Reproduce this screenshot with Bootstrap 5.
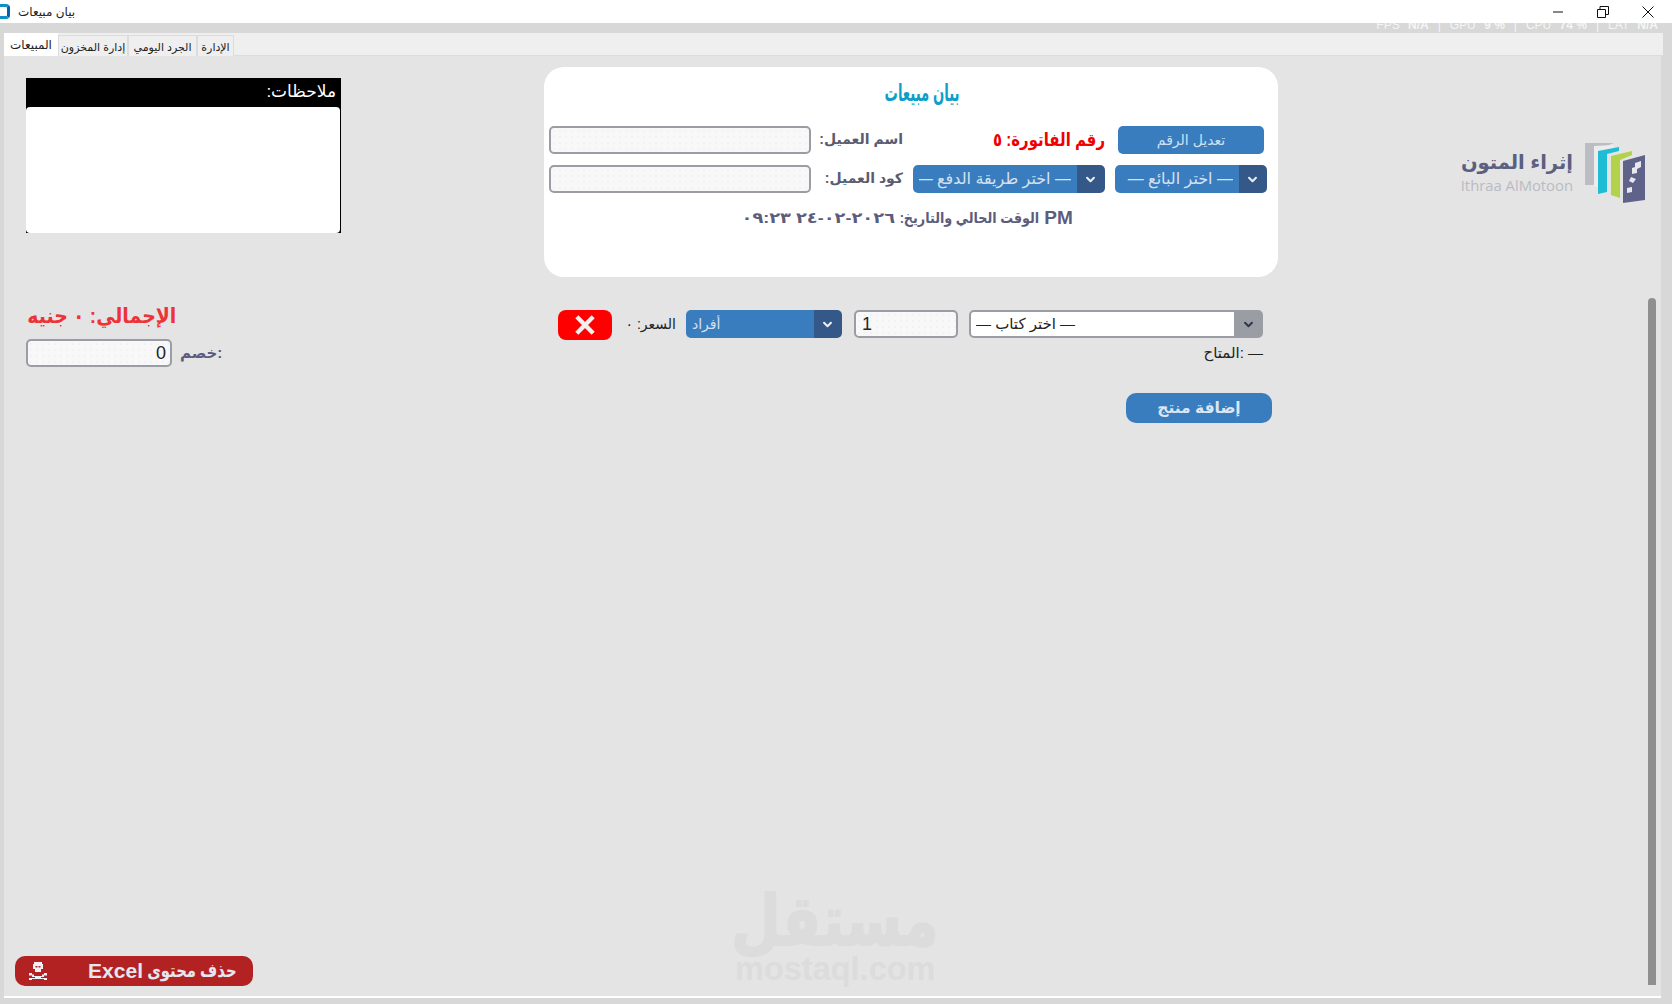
<!DOCTYPE html>
<html lang="ar">
<head>
  <meta charset="UTF-8" />
  <title>بيان مبيعات</title>
  <link href="https://cdn.jsdelivr.net/npm/bootstrap@5.3.0/dist/css/bootstrap.min.css" rel="stylesheet">
  <style>
    html, body { height: 100%; }
    body {
      width: 1672px;
      height: 1004px;
      overflow: hidden;
      background: #d8d8d8;
      font-family: "Liberation Sans", "DejaVu Sans", sans-serif;
      color: #222;
    }
    .win-title { height: 23px; background: #fff; font-size: 12px; color: #222; }
    .app-icon { width: 10px; height: 15px; border: 3px solid #0f8fc4; border-left: 0; border-radius: 0 4px 4px 0; border-right-color: #0b5fa8; }
    .win-btn { width: 45px; }
    .win-btns { padding-right: 2px; }
    .stats-strip { height: 10px; overflow: hidden; color: #f5f5f5; font-size: 12px; line-height: 14px; padding-right: 14px; }
    .stats-line { margin-top: -5px; gap: 9px; }
    .stats-line b { margin-left: 5px; font-weight: 700; }
    .win-body { margin-left: 4px; margin-right: 9px; flex: 1 1 auto; min-height: 0; }
    .tab-strip { height: 23px; background: #efefef; border-bottom: 1px solid #dcdcdc; }
    .tab-strip .nav-link {
      height: 21px; margin-top: 2px; padding: 0; text-align: center; font-size: 11px; line-height: 22px; color: #222;
      border: 1px solid #dcdcdc; border-bottom: 0; border-radius: 0; background: #efefef; white-space: nowrap;
    }
    .tab-strip .nav-link.active { height: 23px; margin-top: 0; width: 54px; background: #fff; border: 0; line-height: 24px; font-size: 12px; }
    .tab-stock { width: 70px; }
    .tab-daily { width: 69px; }
    .tab-admin { width: 37px; }
    .work { position: relative; flex: 1 1 auto; min-height: 0; background: #e4e4e4; margin-right: 2px; border-bottom: 2px solid #fff; margin-bottom: 6px; }
    .left-side { width: 540px; padding: 22px 0 10px 22px; }
    .center-side { width: 734px; padding-top: 11px; }
    .right-side { flex: 1 1 auto; padding: 87px 16px 0 0; }
    .notes-box { width: 315px; height: 155px; background: #000; }
    .notes-head { height: 29px; color: #fff; font-size: 17px; line-height: 27px; padding: 0 5px; }
    .notes-area { height: 126px; width: 314px; resize: none; border: 0; border-radius: 4px; background: #fff; display: block; }
    .total-line { margin-top: 71px; width: 152px; color: #ee3338; font-size: 21px; font-weight: 700; line-height: 24px; white-space: nowrap; }
    .total-line span { display: inline-block; transform: scaleX(.9); }
    .discount-line { margin-top: 11px; gap: 8px; color: #5b5b80; font-size: 15px; font-weight: 700; }
    .discount-line .form-control { width: 146px; text-align: right; padding: 0 4px; font-size: 18px; font-weight: 400; }
    .sale-card { height: 210px; background: #fff; border: 0; border-radius: 20px; padding: 11px 11px 0 5px; }
    .sale-title { color: #0d9fc9; font-size: 24px; font-weight: 700; line-height: 30px; margin: 0 0 18px; padding-left: 28px; text-align: center; }
    .sale-title span { display: inline-block; transform: scaleX(.55); white-space: nowrap; }
    .sale-grid { display: grid; grid-template-columns: 152px 192px 82px 262px; column-gap: 10px; row-gap: 11px; height: 67px; grid-auto-rows: 28px; }
    .invoice-no { color: #f00000; font-size: 18px; font-weight: 700; line-height: 28px; white-space: nowrap; transform: scaleX(.83); transform-origin: right center; }
    .field-label { color: #5b5b70; font-size: 14px; font-weight: 700; line-height: 26px; white-space: nowrap; }
    .form-control.soft-field {
      height: 28px; min-height: 0; border: 2px solid #9a9da3; border-radius: 5px; background-color: #f8f8f8;
      background-image: radial-gradient(#ececec .6px, transparent .8px); background-size: 6px 6px; box-shadow: none;
    }
    .blue-btn { background: #3a7dbf; border: 0; color: #cfe0f0; border-radius: 5px; font-size: 14px; padding: 0; height: 28px; line-height: 28px; }
    .edit-no { width: 146px; margin: 0 3px; }
    .form-select.blue-select {
      height: 28px; padding: 0 34px 0 6px; font-size: 16px; line-height: 26px; color: #d5e2f0; border: 0; border-radius: 5px;
      background-color: #3a7dbf;
      background-image: url("data:image/svg+xml,%3csvg xmlns='http://www.w3.org/2000/svg' viewBox='0 0 16 16'%3e%3cpath fill='none' stroke='%23e8eef6' stroke-width='3' stroke-linecap='round' stroke-linejoin='round' d='M3 5.500l5 5 5-5'/%3e%3c/svg%3e"), linear-gradient(#345887, #345887);
      background-repeat: no-repeat; background-position: right 9px center, right center; background-size: 11px 11px, 28px 100%;
    }
    .form-select.book-select {
      height: 28px; padding: 0 36px 0 5px; font-size: 15px; color: #222; border: 2px solid #9a9da3; border-radius: 5px;
      background-color: #fff;
      background-image: url("data:image/svg+xml,%3csvg xmlns='http://www.w3.org/2000/svg' viewBox='0 0 16 16'%3e%3cpath fill='none' stroke='%232f3a50' stroke-width='3' stroke-linecap='round' stroke-linejoin='round' d='M3 5.500l5 5 5-5'/%3e%3c/svg%3e"), linear-gradient(#9a9da3, #9a9da3);
      background-repeat: no-repeat; background-position: right 7px center, right center; background-size: 11px 11px, 27px 100%;
    }
    .time-line { margin-top: 13px; color: #5c5c7c; font-size: 15px; font-weight: 700; line-height: 24px; white-space: nowrap; gap: 5px; }
    .time-pm { font-size: 19px; }
    .time-label { width: 139px; }
    .time-label span { display: inline-block; transform: scaleX(.85); transform-origin: right center; }
    .time-date { width: 152px; }
    .time-date span { display: inline-block; transform: scaleX(1.19); transform-origin: right center; }
    .item-row { margin-top: 33px; padding: 0 15px 0 14px; height: 30px; }
    .del-btn { width: 54px; height: 30px; background: #f00; border: 0; border-radius: 8px; padding: 0; flex: none; }
    .price-text { width: 52px; font-size: 14px; line-height: 28px; color: #222; white-space: nowrap; margin: 0 10px 0 12px; }
    .form-select.blue-select.unit-select { width: 156px; flex: none; font-size: 14px; }
    .qty-input { width: 104px; margin: 0 11px 0 12px; padding: 0 6px; font-size: 18px; flex: none; }
    .book-wrap { width: 294px; flex: none; }
    .stock-text { margin: 3px 15px 0 0; font-size: 15px; line-height: 20px; color: #222; }
    .add-row { margin: 30px 6px 0 0; }
    .add-btn { width: 146px; height: 30px; background: #3a7dbf; border: 0; color: #dbe6f2; font-size: 15.500px; font-weight: 700; border-radius: 10px; padding: 0; line-height: 28px; }
    .excel-btn { width: 238px; height: 30px; margin-left: -11px; background: #b22222; border: 0; border-radius: 10px; color: #e6e6f0; font-weight: 700; padding: 0 16px 0 13px; line-height: 28px; white-space: nowrap; }
    .excel-word { font-size: 21px; }
    .excel-ar { font-size: 19px; width: 86px; text-align: right; }
    .excel-ar span { display: inline-block; transform: scaleX(.78); transform-origin: right center; }
    .logo-ar { color: #5b5f80; font-size: 19.500px; font-weight: 700; line-height: 26px; white-space: nowrap; }
    .logo-en { color: #b9bbc3; font-size: 14.800px; line-height: 20px; font-family: "Open Sans", sans-serif; white-space: nowrap; }
    .logo-text { padding-top: 6px; }
    .logo-gap { gap: 12px; }
    .watermark { position: absolute; left: 731px; bottom: 10px; width: 200px; text-align: center; color: #dcdcdc; pointer-events: none; }
    .watermark-ar { font-size: 70px; font-weight: 700; line-height: 62px; -webkit-text-stroke: 2px #dcdcdc; }
    .watermark-ar span { flex: none; transform: scaleX(.81); white-space: nowrap; }
    .watermark-en { font-size: 32.500px; font-weight: 700; line-height: 34px; }
    .scroll-thumb { position: absolute; left: 1644px; top: 242px; bottom: 11px; width: 8px; background: #8f8f8f; border-radius: 4px 4px 0 0; }
  </style>
</head>
<body class="d-flex flex-column">

<div class="win-title d-flex align-items-center">
  <div class="app-icon me-1 ms-0"></div>
  <div class="ms-1" dir="rtl">بيان مبيعات</div>
  <div class="win-btns d-flex ms-auto">
    <div class="win-btn text-center"><svg width="12" height="12" viewBox="0 0 12 12"><path d="M1 6h10" stroke="#111" fill="none"/></svg></div>
    <div class="win-btn text-center"><svg width="12" height="12" viewBox="0 0 12 12"><path d="M.5 3.500h8v8h-8zM3 3.500V.5h8.500v8H8.500" stroke="#111" fill="none"/></svg></div>
    <div class="win-btn text-center"><svg width="12" height="12" viewBox="0 0 12 12"><path d="M.5 .5l11 11M11.500 .5l-11 11" stroke="#111" fill="none"/></svg></div>
  </div>
</div>

<div class="stats-strip">
  <div class="stats-line d-flex justify-content-end">
    <span>FPS <b>N/A</b></span><span>|</span><span>GPU <b>9 %</b></span><span>|</span><span>CPU <b>74 %</b></span><span>|</span><span>LAT <b>N/A</b></span>
  </div>
</div>

<div class="win-body d-flex flex-column">
  <ul class="nav tab-strip">
    <li class="nav-item"><a class="nav-link active" href="#" dir="rtl">المبيعات</a></li>
    <li class="nav-item"><a class="nav-link tab-stock" href="#" dir="rtl">إدارة المخزون</a></li>
    <li class="nav-item"><a class="nav-link tab-daily" href="#" dir="rtl">الجرد اليومي</a></li>
    <li class="nav-item"><a class="nav-link tab-admin" href="#" dir="rtl">الإدارة</a></li>
  </ul>

  <div class="work d-flex">
    <!-- notes, total and excel button -->
    <div class="left-side d-flex flex-column">
      <div class="notes-box">
        <div class="notes-head text-end" dir="rtl">ملاحظات:</div>
        <textarea class="notes-area"></textarea>
      </div>
      <div class="total-line d-flex justify-content-center" dir="rtl"><span>الإجمالي: ٠ جنيه</span></div>
      <div class="discount-line d-flex align-items-center">
        <input class="form-control soft-field" value="0">
        <span>خصم:</span>
      </div>
      <button class="excel-btn mt-auto d-flex align-items-center justify-content-between" type="button">
        <svg width="20" height="20" viewBox="0 0 20 20" fill="#f2f2f6"><path d="M6 1h8v2h1v5h-2v3H7V8H5V3h1zM7.500 5v1.500h2V5zm3 0v1.500h2V5z"/><path d="M1 12h3v1.500h2V15h8v-1.500h2V12h3v2.500h-3V16h-3v1h6v2h-3v-1H4v1H1v-2h6v-1H4v-1.500H1z"/></svg>
        <span class="d-flex gap-2" dir="rtl">
          <span class="excel-ar"><span>حذف محتوى</span></span>
          <span class="excel-word">Excel</span>
        </span>
      </button>
    </div>

    <!-- invoice card and item row -->
    <div class="center-side">
      <div class="card sale-card">
        <h2 class="sale-title d-flex justify-content-center" dir="rtl"><span>بيان مبيعات</span></h2>
        <div class="sale-grid" dir="rtl">
          <button class="blue-btn edit-no" type="button">تعديل الرقم</button>
          <div class="invoice-no">رقم الفاتورة: ٥</div>
          <div class="field-label">اسم العميل:</div>
          <input class="form-control soft-field">
          <select class="form-select blue-select" dir="ltr"><option dir="rtl">— اختر البائع —</option></select>
          <select class="form-select blue-select" dir="ltr"><option dir="rtl">— اختر طريقة الدفع —</option></select>
          <div class="field-label">كود العميل:</div>
          <input class="form-control soft-field">
        </div>
        <div class="time-line d-flex justify-content-center" dir="rtl">
          <span class="time-pm">PM</span>
          <span class="time-label"><span>الوقت الحالي والتاريخ:</span></span>
          <span class="time-date"><span>٢٠٢٦-٠٢-٢٤ ٠٩:٢٣</span></span>
        </div>
      </div>

      <div class="item-row d-flex">
        <button class="del-btn" type="button"><svg width="24" height="24" viewBox="0 0 22 22"><path d="M3.500 3.500l15 15M18.500 3.500l-15 15" stroke="#f0f0f0" stroke-width="4" fill="none"/></svg></button>
        <div class="price-text text-end" dir="rtl">السعر: ٠</div>
        <select class="form-select blue-select unit-select"><option>أفراد</option></select>
        <input class="form-control soft-field qty-input" value="1">
        <div class="book-wrap"><select class="form-select book-select"><option>— اختر كتاب —</option></select></div>
      </div>
      <div class="stock-text text-end">المتاح: —</div>
      <div class="add-row text-end"><button class="add-btn" type="button" dir="rtl">إضافة منتج</button></div>
    </div>

    <!-- logo -->
    <div class="right-side d-flex justify-content-end align-items-start">
      <div class="d-flex logo-gap">
        <div class="logo-text text-end">
          <div class="logo-ar" dir="rtl">إثراء المتون</div>
          <div class="logo-en">Ithraa AlMotoon</div>
        </div>
        <svg width="60" height="60" viewBox="0 0 60 60">
          <path d="M0 0h29l-8 3v36l-13 3H0z" fill="#bcbdc2"/>
          <path d="M9 3l20-1v4L18 9v37l-9-3z" fill="#ececec"/>
          <path d="M13 8l21-4v4l-12 3v38l-9 2z" fill="#1fbcd6"/>
          <path d="M26 13l21-5v4l-12 5v38l-9-3z" fill="#b2d24a"/>
          <path d="M38 18l22-6v45l-22 3z" fill="#5f6389"/>
          <path d="M50 20l6-2v6l-4 2v4l-5 1v-6l3-1zM46 34l5 2-3 4-4-2zM42 45l5-1v5l-5 1z" fill="#e8e8ec"/>
        </svg>
      </div>
    </div>

    <div class="watermark">
      <div class="watermark-ar d-flex justify-content-center" dir="rtl"><span>مستقل</span></div>
      <div class="watermark-en">mostaql.com</div>
    </div>
    <div class="scroll-thumb"></div>
  </div>
</div>

<script src="https://cdn.jsdelivr.net/npm/bootstrap@5.3.0/dist/js/bootstrap.bundle.min.js"></script>
</body>
</html>
